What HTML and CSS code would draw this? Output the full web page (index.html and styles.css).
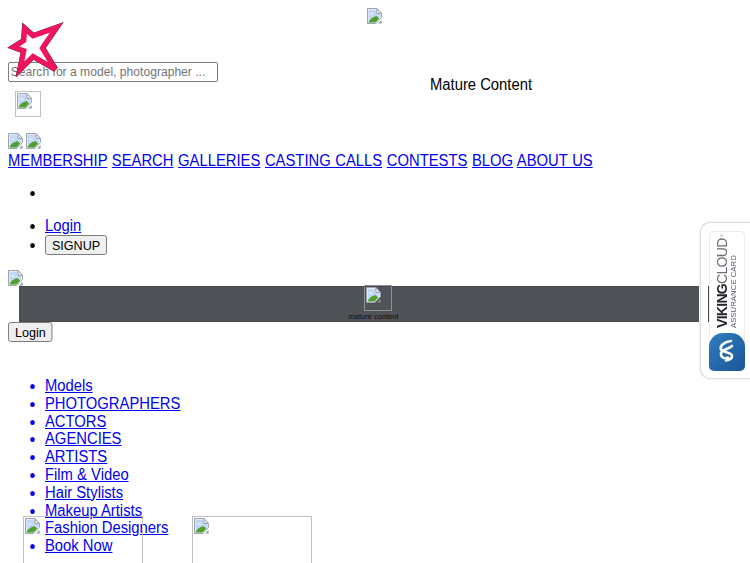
FILE: index.html
```html
<!DOCTYPE html>
<html lang="en">
<head>
    <meta charset="UTF-8">
    <meta name="viewport" content="width=device-width, initial-scale=1.0">
    <title>Models and Photographers</title>
    <link rel="stylesheet" href="styles.css">
</head>
<body>
    <svg class="sprite" aria-hidden="true">
        <symbol id="broken" viewBox="0 0 16 16" preserveAspectRatio="none">
            <path d="M0.5 0.5H10.5L15.5 5.5V9.5L9.5 15.5H0.5Z" fill="#fff" stroke="#9aa0a8"/>
            <path d="M1.5 1.5H10V6H14.5V9.5L9.5 14.5H1.5Z" fill="#c3d8f7"/>
            <path d="M3 6.5C4 5 6.5 5 7.5 6.5H3Z" fill="#fff"/>
            <path d="M1.5 14.5C3 11 6 9 10 8L13 10.5L9 14.5Z" fill="#4fa02e"/>
            <path d="M10.5 0.5V5.5H15.5Z" fill="#e4e6ea" stroke="#9aa0a8"/>
            <path d="M15.5 12V15.5H12Z" fill="#8f9399"/>
        </symbol>
    </svg>

    <div class="top-icon"><svg class="broken"><use href="#broken"/></svg></div>

    <svg class="star" viewBox="0 0 60 58" preserveAspectRatio="none">
        <polygon points="18.7,8.6 27.1,16.2 50.4,7.7 36.4,28.5 49.4,50.2 27.1,37 14.1,50.2 17.8,31.3 7.6,27.5 17.8,20.9" fill="#fff" stroke="#333" stroke-width="5.8"/>
        <polygon points="18.7,8.6 27.1,16.2 50.4,7.7 36.4,28.5 49.4,50.2 27.1,37 14.1,50.2 17.8,31.3 7.6,27.5 17.8,20.9" fill="#fff" stroke="#f0145c" stroke-width="5.2"/>
    </svg>

    <form class="search">
        <input class="search-input narrow" type="text" placeholder="Search for a model, photographer ...">
    </form>
    <div class="mature-title narrow">Mature Content</div>

    <div class="thumb"><svg class="broken"><use href="#broken"/></svg></div>

    <div class="social">
        <a href="#"><svg class="broken"><use href="#broken"/></svg></a>
        <a href="#"><svg class="broken"><use href="#broken"/></svg></a>
    </div>

    <nav class="main-nav narrow">
        <a href="#">MEMBERSHIP</a>
        <a href="#">SEARCH</a>
        <a href="#">GALLERIES</a>
        <a href="#">CASTING CALLS</a>
        <a href="#">CONTESTS</a>
        <a href="#">BLOG</a>
        <a href="#">ABOUT US</a>
    </nav>

    <ul class="empty-list narrow">
        <li></li>
    </ul>
    <ul class="account-list narrow">
        <li><a href="#">Login</a></li>
        <li><button class="btn" type="button">SIGNUP</button></li>
    </ul>

    <div class="banner-icon"><svg class="broken"><use href="#broken"/></svg></div>

    <div class="banner-row">
        <div class="banner">
            <div class="banner-thumb"><svg class="broken"><use href="#broken"/></svg></div>
            <div class="banner-label">mature content</div>
        </div>
        <div class="banner-edge"></div>
    </div>

    <div class="login-row narrow"><button class="btn" type="button">Login</button></div>

    <ul class="category-list narrow">
        <li><a href="#">Models</a></li>
        <li><a href="#">PHOTOGRAPHERS</a></li>
        <li><a href="#">ACTORS</a></li>
        <li><a href="#">AGENCIES</a></li>
        <li><a href="#">ARTISTS</a></li>
        <li><a href="#">Film &amp; Video</a></li>
        <li><a href="#">Hair Stylists</a></li>
        <li><a href="#">Makeup Artists</a></li>
        <li><a href="#">Fashion Designers</a></li>
        <li><a href="#">Book Now</a></li>
    </ul>

    <div class="promo promo-left"><svg class="broken"><use href="#broken"/></svg></div>
    <div class="promo promo-right"><svg class="broken"><use href="#broken"/></svg></div>

    <aside class="seal">
        <div class="seal-card">
            <div class="seal-text">
                <span class="seal-name"><b>VIKING</b>CLOUD<span class="seal-reg">&reg;</span></span>
                <span class="seal-sub">ASSURANCE CARD</span>
            </div>
            <div class="seal-mark">
                <svg viewBox="0 0 36 38" class="seal-swirl">
                    <path d="M22 8C15 9 10.5 13 12 16.5C13.5 19.5 22 19 23 22.5C23.5 25 21 27 17 27.5" fill="none" stroke="#fff" stroke-width="2.6" stroke-linecap="round"/>
                    <path d="M23 13C20 16 13.5 16 12 20C11.5 24 15 26.5 19 24.5" fill="none" stroke="#fff" stroke-width="2.6" stroke-linecap="round"/>
                </svg>
            </div>
        </div>
    </aside>
</body>
</html>
```

FILE: styles.css
```css
body {
    margin: 8px;
    font-family: 'Liberation Sans', Arial, sans-serif;
    font-size: 16px;
    color: #000;
}

a {
    color: #00e;
}

.sprite {
    display: none;
}

/* text in the shot is squeezed sideways */
.narrow {
    transform: scaleX(0.925);
    transform-origin: 0 50%;
}

.broken {
    display: block;
    width: 15px;
    height: 16px;
}

.top-icon {
    display: flex;
    justify-content: center;
    height: 16px;
    padding-right: 1.5px;
}

.star {
    position: absolute;
    left: 6px;
    top: 20px;
    width: 60px;
    height: 57px;
    z-index: 2;
}

.search {
    margin-top: 38px;
    height: 20px;
}

.search-input {
    display: block;
    box-sizing: border-box;
    width: 227px;
    height: 20px;
    padding: 0 2px 2px;
    border: 1px solid #767676;
    border-radius: 2px;
    font-family: 'Liberation Sans', Arial, sans-serif;
    font-size: 13.1px;
}

.search-input::placeholder {
    color: #757575;
}

.mature-title {
    position: absolute;
    left: 430px;
    top: 76px;
}

.thumb {
    box-sizing: border-box;
    width: 26px;
    height: 26px;
    margin: 9px 0 0 7px;
    padding: 1px;
    border: 1px solid #c0c0c0;
}

.social {
    display: flex;
    gap: 3px;
    margin-top: 16px;
    height: 16px;
}

.main-nav {
    margin-top: 3px;
    line-height: 18px;
    word-spacing: 0.5px;
}

.empty-list {
    margin: 14px 0 15px;
    padding-left: 40px;
    height: 18px;
}

.empty-list li {
    height: 18px;
}

.account-list {
    margin: 15px 0;
    padding-left: 40px;
}

.account-list li {
    line-height: 18px;
}

.btn {
    height: 20px;
    padding: 1px 6.5px;
    border: 1px solid #767676;
    border-radius: 3px;
    background: #efefef;
    font-family: 'Liberation Sans', Arial, sans-serif;
    font-size: 13.6px;
    color: #000;
}

.banner-icon {
    height: 16px;
}

.banner-row {
    display: flex;
    margin-left: 11px;
    margin-top: -1px;
    gap: 9px;
    height: 36px;
    padding-top: 1px;
}

.banner {
    display: flex;
    flex-direction: column;
    align-items: center;
    box-sizing: border-box;
    width: 680px;
    height: 36px;
    padding-left: 38px;
    background: #4f5256;
    border-top: 1px solid #45484c;
    border-bottom: 1px solid #45484c;
}

.banner-thumb {
    box-sizing: border-box;
    width: 28px;
    height: 28px;
    margin-top: -2px;
    padding: 1px;
    border: 1px solid #8d8f92;
}

.banner-label {
    margin: 1px 9px 0 0;
    font-size: 7.5px;
    line-height: 9px;
    color: #111;
}

/* edge of the next slide, shows over the seal */
.banner-edge {
    position: relative;
    z-index: 1;
    width: 1px;
    height: 36px;
    background: #45484c;
}

.login-row {
    height: 20px;
}

.category-list {
    margin: 35px 0 0;
    padding-left: 40px;
    color: #00e;
}

.category-list li {
    line-height: 17.8px;
}

.promo {
    position: absolute;
    top: 516px;
    box-sizing: border-box;
    width: 120px;
    height: 47px;
    padding: 1px;
    border: 1px solid #c0c0c0;
    border-bottom: 0;
}

.promo-left {
    left: 23px;
}

.promo-right {
    left: 192px;
}

.seal {
    position: fixed;
    top: 222px;
    right: 0;
    box-sizing: border-box;
    width: 50px;
    height: 157px;
    padding: 8px 5px 7px 8px;
    background: #fff;
    border: 1px solid #dcdcdc;
    border-right: 0;
    border-radius: 10px 0 0 10px;
    box-shadow: 0 0 2px rgba(0, 0, 0, 0.12);
}

.seal-card {
    display: flex;
    flex-direction: column;
    justify-content: space-between;
    box-sizing: border-box;
    height: 140px;
    width: 36px;
    border: 1px solid #ececec;
    border-radius: 4px 4px 6px 6px;
}

.seal-text {
    display: flex;
    flex-direction: column;
    gap: 1px;
    height: 96px;
    padding-right: 6px;
    writing-mode: vertical-rl;
    transform: rotate(180deg);
    white-space: nowrap;
}

.seal-name {
    font-size: 14px;
    line-height: 12px;
    letter-spacing: -0.7px;
    color: #6a6e75;
}

.seal-name b {
    color: #23262c;
}

.seal-reg {
    font-size: 4px;
}

.seal-sub {
    font-size: 7.8px;
    line-height: 9px;
    color: #555a62;
}

.seal-mark {
    height: 38px;
    margin: 0 -1px -1px;
    border-radius: 14px 14px 5px 5px;
    background: linear-gradient(135deg, #2f7fc0, #1c5496);
}

.seal-swirl {
    display: block;
    width: 36px;
    height: 38px;
}
```
